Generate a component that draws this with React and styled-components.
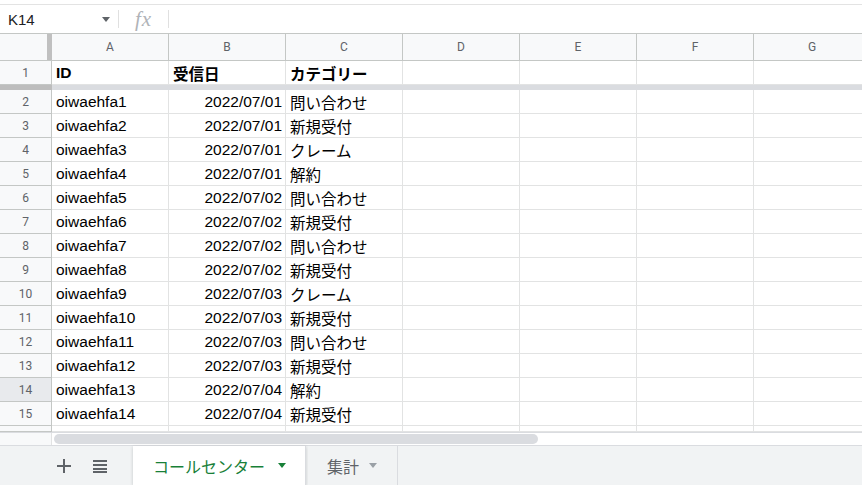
import React from 'react'
import styled, { createGlobalStyle } from 'styled-components'

const Global = createGlobalStyle`
  html, body { margin: 0; padding: 0; background: #fff; }
  body { font-family: "Liberation Sans", Arial, "Noto Sans CJK JP", sans-serif; overflow: hidden; }
`

const COLS = ['A', 'B', 'C', 'D', 'E', 'F', 'G']
const GRID = '52px repeat(7, 117px)'

const rows = [
  ['oiwaehfa1', '2022/07/01', '問い合わせ'],
  ['oiwaehfa2', '2022/07/01', '新規受付'],
  ['oiwaehfa3', '2022/07/01', 'クレーム'],
  ['oiwaehfa4', '2022/07/01', '解約'],
  ['oiwaehfa5', '2022/07/02', '問い合わせ'],
  ['oiwaehfa6', '2022/07/02', '新規受付'],
  ['oiwaehfa7', '2022/07/02', '問い合わせ'],
  ['oiwaehfa8', '2022/07/02', '新規受付'],
  ['oiwaehfa9', '2022/07/03', 'クレーム'],
  ['oiwaehfa10', '2022/07/03', '新規受付'],
  ['oiwaehfa11', '2022/07/03', '問い合わせ'],
  ['oiwaehfa12', '2022/07/03', '新規受付'],
  ['oiwaehfa13', '2022/07/04', '解約'],
  ['oiwaehfa14', '2022/07/04', '新規受付'],
]

const Page = styled.div`
  width: 862px;
  height: 485px;
  display: flex;
  flex-direction: column;
  overflow: hidden;
  & > * { flex-shrink: 0; }
`

const TopGap = styled.div`
  height: 5px;
  border-bottom: 1px solid #e3e3e3;
  box-sizing: border-box;
`

const FormulaBar = styled.div`
  height: 28px;
  display: flex;
  align-items: center;
`

const NameBox = styled.div`
  width: 119px;
  box-sizing: border-box;
  padding: 0 8px 0 8px;
  display: flex;
  align-items: center;
  justify-content: space-between;
  font-size: 15px;
  color: #202124;
  border-right: 1px solid #e0e0e0;
  height: 18px;
`

const Caret = styled.span`
  width: 0;
  height: 0;
  border-left: 4.5px solid transparent;
  border-right: 4.5px solid transparent;
  border-top: 5px solid ${p => p.$color || '#5f6368'};
  display: inline-block;
  flex-shrink: 0;
`

const Fx = styled.div`
  width: 50px;
  height: 18px;
  box-sizing: border-box;
  border-right: 1px solid #e0e0e0;
  display: flex;
  align-items: center;
  justify-content: center;
  font-family: "Liberation Serif", serif;
  font-style: italic;
  font-size: 21px;
  color: #b0b3b8;
  letter-spacing: 1px;
`

const Sheet = styled.div`
  display: flex;
  flex-direction: column;
  & > * { flex-shrink: 0; }
`

const Row = styled.div`
  display: grid;
  grid-template-columns: ${GRID};
  height: ${p => p.$h || 24}px;
`

const ColHead = styled.div`
  background: #f8f9fa;
  border-top: 1px solid #c4c7c5;
  border-bottom: 1px solid #c4c7c5;
  border-right: 1px solid #c4c7c5;
  box-sizing: border-box;
  display: flex;
  align-items: center;
  justify-content: center;
  font-family: Roboto, "Liberation Sans", sans-serif;
  font-size: 12px;
  color: #5f6368;
`

const Corner = styled(ColHead)`
  border-right: none;
  background: linear-gradient(to right, #f8f9fa 0 47px, #c0c0c0 47px 52px);
`

const RowHead = styled.div`
  background: ${p => (p.$active ? '#e8eaed' : '#f8f9fa')};
  border-bottom: 1px solid #c4c7c5;
  border-right: 1px solid #c4c7c5;
  box-sizing: border-box;
  display: flex;
  align-items: center;
  justify-content: center;
  font-family: Roboto, "Liberation Sans", sans-serif;
  font-size: 12px;
  color: #5f6368;
`

const Cell = styled.div`
  border-bottom: 1px solid #e2e3e3;
  border-right: 1px solid #e2e3e3;
  box-sizing: border-box;
  display: flex;
  align-items: center;
  justify-content: ${p => (p.$right ? 'flex-end' : 'flex-start')};
  padding: 1px 3px 0 4px;
  font-size: 15.5px;
  font-weight: ${p => (p.$bold ? 700 : 400)};
  color: #000;
  white-space: nowrap;
  overflow: hidden;
`

const FreezeBar = styled.div`
  height: 5px;
  background: linear-gradient(to right, #bdbdbd 0 52px, #dadce0 52px);
`

const ScrollStrip = styled.div`
  height: 12px;
  display: grid;
  grid-template-columns: 52px 1fr;
  border-top: 1px solid #dadce0;
  border-bottom: 1px solid #dadce0;
`

const ScrollCorner = styled.div`
  background: #f8f9fa;
  border-right: 1px solid #e2e3e3;
`

const Track = styled.div`
  display: flex;
  align-items: center;
  padding-left: 2px;
`

const Thumb = styled.div`
  width: 484px;
  height: 10px;
  border-radius: 5px;
  background: #dadce0;
`

const TabBar = styled.div`
  flex: 1 1 auto;
  background: #f1f3f4;
  display: flex;
  align-items: stretch;
`

const Tools = styled.div`
  width: 133px;
  display: flex;
  align-items: center;
  padding-left: 57px;
  gap: 22px;
  box-sizing: border-box;
`

const Tab = styled.div`
  display: flex;
  align-items: center;
  gap: ${p => (p.$active ? 13 : 10)}px;
  padding-left: ${p => (p.$active ? 20 : 19)}px;
  width: ${p => p.$w}px;
  box-sizing: border-box;
  white-space: nowrap;
  background: ${p => (p.$active ? '#fff' : '#f1f3f4')};
  color: ${p => (p.$active ? '#188038' : '#5f6368')};
  border-right: 1px solid #dadce0;
  box-shadow: ${p => (p.$active ? '0 1px 3px rgba(60,64,67,0.25)' : 'none')};
  font-family: "Noto Sans CJK JP", sans-serif;
  font-size: 16px;
  margin-left: ${p => p.$ml || 0}px;
`

const Plus = () => (
  <svg width="14" height="14" viewBox="0 0 14 14">
    <path d="M6 0h2v6h6v2H8v6H6V8H0V6h6z" fill="#5f6368" />
  </svg>
)

const ListIcon = () => (
  <svg width="14" height="14" viewBox="0 0 14 14">
    <path d="M0 1h14v2H0zM0 5h14v2H0zM0 9h14v2H0zM0 12h14v2H0z" fill="#5f6368" />
  </svg>
)

export default function App() {
  return (
    <Page>
      <Global />
      <TopGap />
      <FormulaBar>
        <NameBox>
          K14
          <Caret />
        </NameBox>
        <Fx>fx</Fx>
      </FormulaBar>
      <Sheet>
        <Row $h={28}>
          <Corner />
          {COLS.map(c => (
            <ColHead key={c}>{c}</ColHead>
          ))}
        </Row>
        <Row>
          <RowHead>1</RowHead>
          <Cell $bold>ID</Cell>
          <Cell $bold>受信日</Cell>
          <Cell $bold>カテゴリー</Cell>
          {[0, 1, 2, 3].map(i => (
            <Cell key={i} />
          ))}
        </Row>
        <FreezeBar />
        {rows.map((r, i) => (
          <Row key={i}>
            <RowHead $active={i + 2 === 14}>{i + 2}</RowHead>
            <Cell>{r[0]}</Cell>
            <Cell $right>{r[1]}</Cell>
            <Cell>{r[2]}</Cell>
            {[0, 1, 2, 3].map(j => (
              <Cell key={j} />
            ))}
          </Row>
        ))}
        <Row $h={6}>
          <RowHead />
          {COLS.map(c => (
            <Cell key={c} />
          ))}
        </Row>
      </Sheet>
      <ScrollStrip>
        <ScrollCorner />
        <Track>
          <Thumb />
        </Track>
      </ScrollStrip>
      <TabBar>
        <Tools>
          <Plus />
          <ListIcon />
        </Tools>
        <Tab $active $w={173}>
          コールセンター
          <Caret $color="#188038" />
        </Tab>
        <Tab $w={90} $ml={2}>
          集計
          <Caret $color="#9aa0a6" />
        </Tab>
      </TabBar>
    </Page>
  )
}
